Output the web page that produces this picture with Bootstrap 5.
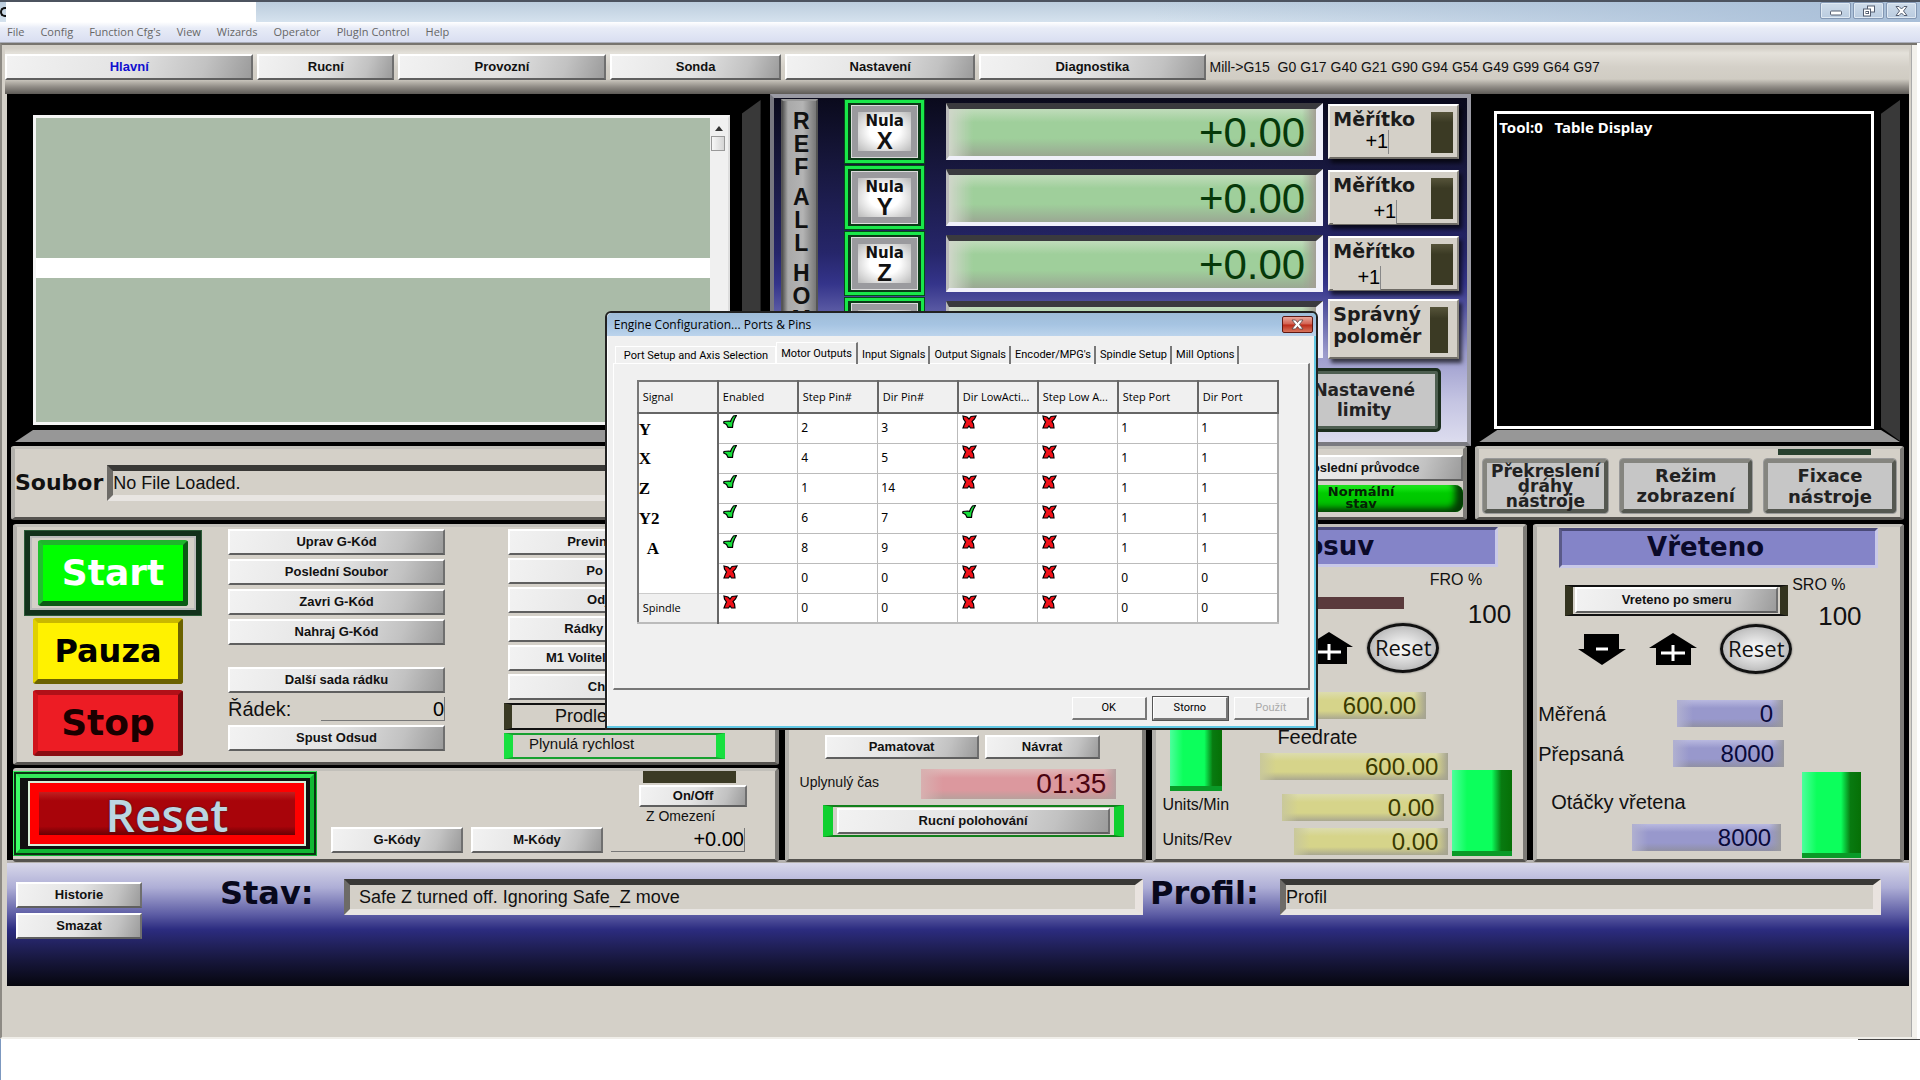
<!DOCTYPE html>
<html lang="cs">
<head>
<meta charset="utf-8">
<meta name="viewport" content="width=device-width, initial-scale=1">
<title>Mach3 CNC</title>
<link href="https://cdn.jsdelivr.net/npm/bootstrap@5.3.0/dist/css/bootstrap.min.css" rel="stylesheet">
<style>
body{font-family:"Liberation Sans",Arial,sans-serif;font-size:14px;line-height:18px;color:#111;background:#fff;overflow-x:hidden}
.wide{font-family:"DejaVu Sans",Verdana,sans-serif;font-weight:700}
.titlebar{height:22px;border-top:2px solid #4c535f;background:linear-gradient(90deg,#fff0 60%,#a9bfd8 100%),linear-gradient(#bccddd,#d5e2ee)}
.titlebar .blank{width:250px;height:20px;margin-left:6px;background:#fff}
.titlebar .orb{position:absolute;left:0;top:5px;width:6px;height:10px;border:2px solid #111;border-right:0;border-radius:6px 0 0 6px}
.winbtn{width:31px;height:17px;padding:0;line-height:0;border:1px solid #8397b3;border-radius:2px;background:linear-gradient(#cfdcea,#b9cbdf);box-shadow:inset 0 0 0 1px #dfe9f3}
.menubar{height:21px;background:linear-gradient(#fff,#e8ecf7 30%,#d9def1);border-bottom:1px solid #a9acb8;font-family:"Open Sans","Noto Sans",sans-serif;font-size:11px;gap:16px;padding:0 7px}
.menubar a{color:#666;text-decoration:none}
.work{background:#d4d0c8;border-left:2px solid #8d8a84;border-top:2px solid #77746e;border-bottom:2px solid #f0eee9;margin-right:3px;padding:0 8px 51px 5px;box-shadow:inset -5px 0 0 #f3f1ec,inset -6px 0 0 #aaa}
.tabs{height:49px;padding:9px 0 0 0;margin-left:-2px;gap:4px;background:linear-gradient(#d4d0c8 0 3px,#e4e1da 8px,#d4d0c8 22px,#d0ccc3 34px,#8f8b85 42px,#5e5b57)}
.mb{height:26px;border:2px solid;border-color:#fff #6f6f6f #5f5f5f #fff;background:linear-gradient(110deg,#f2f2f2 0%,#e3e3e3 50%,#c2c2c2 80%,#9b9b9b 100%);font:bold 13px/16px "Liberation Sans",Arial,sans-serif;color:#111;padding:0 4px;white-space:nowrap;overflow:hidden}
.tabs .mb{flex:1 1 0;min-width:0}
.deck{background:#000}
.rowA{display:grid;grid-template-columns:763fr 702fr 438fr;height:352px}
.blackp{background:#000;position:relative;padding:21px 40px 21px 26px}
.blackp::before{content:"";position:absolute;right:9px;top:6px;bottom:5px;width:19px;background:#393939;clip-path:polygon(100% 0,100% 100%,0 96%,0 4%)}
.blackp::after{content:"";position:absolute;left:8px;right:9px;bottom:4px;height:12px;background:#979797;clip-path:polygon(18px 0,calc(100% - 19px) 0,100% 100%,0 100%)}
.gcode{height:310px;border:3px solid #f4f4f4;border-right:2px solid #ddd;background:#aabba8;width:100%}
.gcode .line{position:relative;height:20px;background:#fff}
.sb{width:18px;background:#f0f0f0}
.sb .thumb{width:14px;height:15px;margin:5px 1px;border:1px solid #999;background:linear-gradient(90deg,#f7f7f7,#d5d5d5)}
.axes{border:4px solid #8c8c96;border-color:#9a9aa4 #9a9aa4 #7a7a80 #777780;background:linear-gradient(#0a0a1c,#16163a 18%,#26266a 45%,#34348a 54%,#5a5aa4 62%,#9a9acc 74%,#c4c4e2 88%,#dcdcee)}
.ref{width:46px;margin:1px 0 0 7px;background:linear-gradient(90deg,#5c5c5c,#a9a9a9 15%,#b4b4b4 60%,#777 100%);border:2px solid #555;border-top-color:#999;font:700 23px/23px "Liberation Sans",Arial,sans-serif;color:#111;padding:9px 0 0 4px}
.ref span{display:block;height:23px}
.ref .sp{height:7px}
.axgrid{display:grid;grid-template-columns:79px 1fr 131px;grid-auto-rows:66px;align-items:center;column-gap:5px;padding:0 8px 0 27px}
.nula{height:63px;padding:3px 4px;border:3px solid #19e84a;background:#0a3a16;outline:1px solid #064c16}
.nula>span{display:flex;flex-direction:column;height:100%;border:6px solid #9a9a9e;background:radial-gradient(#fff 40%,#b9b9b9);font-size:15px;line-height:18px;color:#111;box-shadow:0 0 0 1px #ddd}
.nula b{font:700 24px/21px "Liberation Sans",sans-serif}
.dro{width:100%;text-align:right;border:0;min-width:0;padding:0;outline:0}
.drobig{height:57px;margin-left:17px;width:calc(100% - 17px);border:solid;border-width:6px 7px 4px 3px;border-color:#3a3a3e #f0f0fa #f0f0fa #bbb;font-size:42px;color:#06390a;padding:2px 11px 0 0;background:linear-gradient(90deg,#cfd6c9 0,#9fce9c00 24px calc(100% - 14px),#a39f95),linear-gradient(#c0dcbb,#9fcf9b 28%,#9fcf9b 62%,#9aa893 100%)}
.meri{height:55px;background:#d4d0c8;border:2px solid;border-color:#fff #8b8880 #6f6c66 #f0efe9;box-shadow:3px 4px 4px #000a;padding:2px 4px 0 3px}
.meri .wide{font-size:19px;line-height:22px;color:#1c1c1c}
.meri .val{width:56px;height:24px;background:#d4d0c8;border:0;border-right:1px solid #888;font-size:20px;text-align:right;padding:0}
.led{background:linear-gradient(#56543a,#3b3a24 25%);width:22px;flex:none}
.gbtn{border:4px solid;border-color:#85857f #555851 #555851 #85857f;background:#c6c6c6;color:#222;border-radius:3px;outline:1px solid #999;padding:0 2px;text-align:center}
.limity{width:150px;height:60px;border:4px solid #4d5e50;outline:3px solid #1c2e1e;outline-offset:-1px;font-size:17px;line-height:20px}
.tooltxt{height:318px;border:3px solid #fff;padding:3px 2px;color:#fff;font:700 15px/20px "Noto Sans","Open Sans",sans-serif;background:#000;white-space:pre}
.pan{background:#d4d0c8;border:4px solid;border-color:#c2c0ba #7d7b77 #55534f #b2b0ab;border-bottom-width:3px;border-top-width:3px;border-radius:3px;min-width:0}
.rowB{display:grid;grid-template-columns:1457fr 429fr;column-gap:8px;padding:0 5px 4px 4px;height:78px}
.rowC{display:grid;grid-template-columns:766fr 362fr 375fr 371fr;column-gap:6px;padding:0 5px 0 6px;height:336px}
.fld{height:36px;background:#d4d0c8;border:solid;border-width:6px 8px 6px 6px;border-color:#393836 #e9e3df #e8e5e2 #6d6b67;font-size:18px;color:#111;padding:0;min-width:0;outline:0}
.greenb{background:linear-gradient(#20f020,#0c0 30%,#0b0);border:0;border-radius:8px;box-shadow:inset -8px -4px 6px #043c04;font-size:13px;line-height:12px;color:#052005;height:27px}
.big{width:150px;height:66px;border:5px solid;border-radius:3px}
.start{background:#0f0;border-color:#1fb52c #0b5a14 #0b5a14 #1fc02e;color:#fff;font-size:36px;line-height:44px}
.startf{border:5px solid #12311b;outline:1px solid #2c5a38;padding:4px 8px 4px 4px;width:176px;height:84px;box-shadow:inset 0 0 0 2px #bbb}
.pauza{background:#fff200;border-color:#c9b800 #6b6200 #6b6200 #e0d000;font-size:32px;line-height:40px}
.stop{background:#ed1c24;border-color:#b21018 #700a0e #8a0d12 #d0141c;font-size:36px;line-height:50px;color:#1a0000}
.resetf{width:304px;height:85px;border:7px solid;border-color:#35e85a #11b834 #11b834 #3dff66;outline:2px solid #0c3313;outline-offset:-3px;background:#111;padding:5px 6px 5px 10px}
.resetr{width:100%;height:100%;border:9px solid #f00;outline:2px solid #d8f0d8;background:linear-gradient(#c02020,#a8040a 20%,#a8040a 80%,#6a0004);color:#bcd6e2;font:600 46px/40px "Open Sans","Noto Sans",sans-serif;padding:0;text-shadow:0 0 2px #222}
.thin{border:0;border-right:1px solid #777;border-bottom:1px solid #777;background:transparent;font-size:20px;text-align:right;padding:0;height:24px}
.hdr{height:40px;background:#8484c8;border:3px solid;border-color:#4a4a78 #c8c8e8 #c8c8e8 #5a5a88;font-size:26px;line-height:32px;text-align:center;color:#0a0a2a}
.num{height:27px;font-size:24px;line-height:27px;padding-right:10px}
.yel{color:#3a3a00;background:linear-gradient(90deg,#c9c89b,#d6d48a00 16px calc(100% - 12px),#a5a391),linear-gradient(#dcdcae,#d6d48a 30% 70%,#aaa890)}
.blu{color:#0a0a3a;background:linear-gradient(90deg,#b0b0d0,#9696cc00 16px calc(100% - 12px),#9a9a9e),linear-gradient(#b9b9e0,#9898cc 30% 70%,#9090a4)}
.redd{color:#4a0410;background:linear-gradient(90deg,#d8b0b0,#dc969c00 22px calc(100% - 12px),#b4a0a0),linear-gradient(#e0b8b8,#dc989e 30% 70%,#b8a09c);font-size:28px;height:30px}
.vbar{background:linear-gradient(90deg,#4cff9c,#0cff5c 25% 66%,#087a10 82%,#067006);border-bottom:5px solid #0a9a28}
.circ{width:72px;height:50px;border-radius:50%;border:3px solid #111;background:radial-gradient(#fff,#c8c8c8 60%,#999);font:500 22px/28px "Open Sans",sans-serif;padding:0 0 3px;box-shadow:0 0 2px #555;color:#111}
.arr{border:0;background:none;padding:0;line-height:0}
.t20{font-size:20px;line-height:24px}.t16{font-size:16px;line-height:20px}.t26{font-size:26px;line-height:26px}
.status{height:126px;background:linear-gradient(#d8d8ea,#aeaed6 20%,#5c5ca4 42%,#2c2c80 54%,#22225e 66%,#16163a 80%,#06060e);border-top:3px solid #b5b2b0}
.status label{font-size:32px;line-height:32px;color:#08081c}
/* dialog */
.dlg{position:absolute;left:31.5%;top:311px;width:713px;height:419px;background:#f0f0f0;border:2px solid #222;border-radius:6px 6px 0 0;box-shadow:inset -1px -1px 0 1px #62c8e4,inset 1px 0 0 #fff;font:11px/16px "Open Sans","Noto Sans",sans-serif;color:#000}
.dlgt{height:23px;border-radius:5px 5px 0 0;background:linear-gradient(#9fbcd8,#a6c4e2 50%,#bcd4ec);padding:0 3px 0 7px;font-size:12px}
.cls{width:31px;height:17px;border:1px solid #5e1812;border-radius:2px;padding:0;line-height:0;background:linear-gradient(#e9a79c,#d2604f 48%,#bb2a18 52%,#d8745c)}
.dtabs{margin:7px 0 0 8px;height:20px}
.dtabs button{border:0;border-right:2px solid #777;background:none;padding:0 3px 0 4px;font:11px/16px Roboto,"Liberation Sans",sans-serif;height:18px;margin-top:3px;white-space:nowrap}
.dtabs .first{border:1px solid #fff;border-width:1px 1px 0;padding:0 7px 0 8px}
.dtabs .on{height:22px;margin-top:-1px;border-left:1px solid #fff;border-top:1px solid #fff;padding:0 4px}
.dbody{margin:0 6px;height:327px;border:solid;border-width:1px 2px 2px 1px;border-color:#fff #777 #777 #fff;padding:16px 0 0 23px}
.ptab{width:642px;table-layout:fixed;border-collapse:collapse;background:#fff;border:2px solid #777;border-right:2px solid #aaa;border-bottom:2px solid #bbb}
.ptab th{height:32px;font-weight:400;background:#f0f0f0;border-right:2px solid #666;border-bottom:2px solid #666;padding:0 4px;white-space:nowrap;overflow:hidden}
.ptab td{height:30px;border:1px solid #bbb;padding:0 3px;vertical-align:middle;font:12px/16px "Noto Sans",sans-serif}
.ptab td.ic{vertical-align:top;padding:1px 4px;line-height:0}
.ptab td.ax{border-left:0;border-top:0;border-bottom:0;border-right:2px solid #666;font:700 17px/20px "Liberation Serif",serif;padding:2px 0 0}
.ptab td.sp{background:#f0f0f0;border-top:1px solid #ccc;border-right:2px solid #666;padding:0 4px;font:11px/16px "Open Sans",sans-serif}
.db{width:75px;height:23px;border:solid;border-width:1px 2px 2px 1px;border-color:#fff #777 #777 #fff;background:#f0f0f0;font:11px/16px Roboto,sans-serif;padding:0}
.foot{height:41px;border-left:1px solid #7c98c0}
</style>
<script src="https://cdn.jsdelivr.net/npm/bootstrap@5.3.0/dist/js/bootstrap.bundle.min.js"></script>
</head>
<body>
<svg width="0" height="0" class="position-absolute" aria-hidden="true">
<symbol id="ok" viewBox="0 0 14 13"><path d="M13.500 0.500 L10.500 1 L8.500 4 L7.500 6.500 L6 6 L1 6.500 L0.700 8 L3.500 9.500 L5 12.300 L9.500 12.300 L10 8 L11.500 4 Z" fill="#16e03a" stroke="#000" stroke-width="1.200"/></symbol>
<symbol id="no" viewBox="0 0 15 14"><path d="M1 1 L5 2 L7 4 L9 1.500 L14 1 L12.500 4 L10 6.500 L11.500 9 L12 13 L8.500 13 L7 11 L5.500 13 L1 13 L2.500 9 L3.500 7 L1.500 4 Z" fill="#f01018" stroke="#000" stroke-width="1.200"/></symbol>
<symbol id="dn" viewBox="0 0 48 32"><path d="M6 1H41V16H48L24 32L0 16H6Z" fill="#000"/><path d="M18 16H30" stroke="#fff" stroke-width="3"/></symbol>
<symbol id="up" viewBox="0 0 48 32"><path d="M24 0L48 15H42V32H7V15H0Z" fill="#000"/><path d="M12 20H36M24 12V28" stroke="#fff" stroke-width="3"/></symbol>
</svg>
<header>
<div class="titlebar d-flex position-relative">
<span class="orb"></span><div class="blank"></div>
<div class="ms-auto d-flex" style="gap:2px;padding-right:3px">
<button class="winbtn" aria-label="Minimize"><svg width="14" height="10" viewBox="0 0 14 10"><rect x="1.500" y="5" width="11" height="4" rx="1" fill="#fff" stroke="#555e70"/></svg></button>
<button class="winbtn" aria-label="Restore"><svg width="14" height="12" viewBox="0 0 14 12"><rect x="5.500" y="1" width="7" height="6" fill="#fff" stroke="#555e70"/><rect x="1.500" y="4" width="7" height="7" fill="#fff" stroke="#555e70"/><rect x="4" y="6.500" width="2.500" height="2" fill="none" stroke="#555e70"/></svg></button>
<button class="winbtn" aria-label="Close"><svg width="13" height="10" viewBox="0 0 13 10"><path d="M1 .5H4L6.500 3L9 .5H12L8.500 5L12 9.500H9L6.500 7L4 9.500H1L4.500 5Z" fill="#fff" stroke="#555e70"/></svg></button>
</div></div>
<nav class="menubar d-flex align-items-center"><a href="#">File</a><a href="#">Config</a><a href="#">Function Cfg's</a><a href="#">View</a><a href="#">Wizards</a><a href="#">Operator</a><a href="#">PlugIn Control</a><a href="#">Help</a></nav>
</header>
<main class="work">
<div class="tabs d-flex align-items-start">
<button class="mb" style="flex-grow:237;color:#1010d0">Hlavní</button><button class="mb" style="flex-grow:125">Rucní</button><button class="mb" style="flex-grow:196">Provozní</button><button class="mb" style="flex-grow:160">Sonda</button><button class="mb" style="flex-grow:178">Nastavení</button><button class="mb" style="flex-grow:215">Diagnostika</button>
<div class="pt-1" style="flex:701 1 0;white-space:pre">Mill-&gt;G15  G0 G17 G40 G21 G90 G94 G54 G49 G99 G64 G97</div>
</div>
<div class="deck">
<section class="rowA">
<div class="blackp"><div class="gcode d-flex"><div class="flex-grow-1" style="padding-top:140px"><div class="line"></div></div><div class="sb text-center"><svg width="8" height="5" viewBox="0 0 8 5" class="d-block mx-auto mt-2"><path d="M4 0L8 5H0Z" fill="#333"/></svg><div class="thumb"></div></div></div></div>
<div class="axes d-flex">
<button class="ref d-flex flex-column justify-content-start align-items-center align-self-stretch overflow-hidden"><span>R</span><span>E</span><span>F</span><span class="sp"></span><span>A</span><span>L</span><span>L</span><span class="sp"></span><span>H</span><span>O</span><span>M</span><span>E</span></button>
<div class="flex-grow-1 d-flex flex-column">
<div class="axgrid">
<button class="nula"><span class="wide">Nula<b>X</b></span></button><input class="dro drobig" readonly value="+0.00" aria-label="X"><div class="meri d-flex justify-content-between"><div><label class="wide d-block" for="mx">Měřítko</label><input id="mx" class="val" readonly value="+1"></div><i class="led my-1"></i></div>
<button class="nula"><span class="wide">Nula<b>Y</b></span></button><input class="dro drobig" readonly value="+0.00" aria-label="Y"><div class="meri d-flex justify-content-between"><div><label class="wide d-block" for="my">Měřítko</label><input id="my" class="val mt-1" style="width:64px" readonly value="+1"></div><i class="led my-1"></i></div>
<button class="nula"><span class="wide">Nula<b>Z</b></span></button><input class="dro drobig" readonly value="+0.00" aria-label="Z"><div class="meri d-flex justify-content-between"><div><label class="wide d-block" for="mz">Měřítko</label><input id="mz" class="val mt-1" style="width:48px" readonly value="+1"></div><i class="led my-1"></i></div>
<button class="nula"><span class="wide">Nula<b>4</b></span></button><input class="dro drobig" readonly value="+0.00" aria-label="4"><div class="meri d-flex" style="height:60px"><div class="wide">Správný<br>poloměr</div><i class="led my-1 ms-2" style="width:18px"></i></div>
</div>
<div class="text-end pe-4 pt-2 me-1"><button class="gbtn limity wide">Nastavené<br>limity</button></div>
</div></div>
<div class="blackp" style="padding:17px 35px 17px 23px"><div class="tooltxt">Tool:0   Table Display</div></div>
</section>
<section class="rowB">
<div class="pan d-flex align-items-center">
<label class="wide" for="file" style="font-size:22px">Soubor</label><input id="file" class="fld ms-1" style="width:900px" readonly value="No File Loaded.">
<div class="ms-auto d-flex flex-column" style="width:204px"><button class="mb">Poslední průvodce</button><button class="greenb wide mt-1">Normální<br>stav</button></div>
</div>
<div class="pan d-flex px-1 position-relative align-items-end pb-1" style="font-size:18px;gap:12px">
<button class="gbtn wide" style="flex:128 1 0;height:54px;line-height:15px;font-size:17px;padding:0">Překreslení<br>dráhy<br>nástroje</button>
<button class="gbtn wide" style="flex:132 1 0;height:54px;line-height:20px">Režim<br>zobrazení</button>
<button class="gbtn wide" style="flex:132 1 0;height:54px;line-height:21px">Fixace<br>nástroje</button>
<i class="position-absolute" style="right:29px;top:0;width:93px;height:6px;background:#28402f"></i>
</div>
</section>
<section class="rowC">
<div class="d-flex flex-column" style="gap:3px">
<div class="pan d-flex" style="height:241px">
<div class="d-flex flex-column ps-2 pt-1" style="width:211px"><div class="startf"><button class="big start wide d-block ms-1" style="height:66px">Start</button></div><button class="big pauza wide ms-2" style="margin-top:3px">Pauza</button><button class="big stop wide ms-2" style="margin-top:6px">Stop</button></div>
<div class="d-flex flex-column" style="width:217px;padding-top:2px;gap:4px"><button class="mb">Uprav G-Kód</button><button class="mb">Poslední Soubor</button><button class="mb">Zavri G-Kód</button><button class="mb">Nahraj G-Kód</button><button class="mb" style="margin-top:18px">Další sada rádku</button>
<div class="d-flex justify-content-between t20"><label for="rad">Řádek:</label><input id="rad" class="thin" style="width:124px" readonly value="0"></div><button class="mb">Spust Odsud</button></div>
<div class="d-flex flex-column" style="width:221px;margin-left:59px;gap:3px;padding-top:2px"><button class="mb mx-1">Previnutí dráhy</button><button class="mb mx-1">Po Bloku</button><button class="mb mx-1">Odjezd Z</button><button class="mb mx-1">Rádky preskocit</button><button class="mb mx-1">M1 Volitelné zastavení</button><button class="mb mx-1">Chlazení</button>
<div class="text-center" style="height:27px;border:2px solid #111;border-left:8px solid #3a3a24;font-size:18px;line-height:22px;padding-right:54px">Prodleva</div><div style="height:26px;border:2px solid #18a030;border-left:9px solid #18e040;border-right:9px solid #18e040;font-size:15px;line-height:18px;padding-left:16px">Plynulá rychlost</div></div>
</div>
<div class="pan d-flex align-items-end flex-grow-1" style="border-left-width:0">
<div class="resetf align-self-start flex-shrink-0"><button class="resetr">Reset</button></div>
<button class="mb" style="width:132px;margin:0 0 6px 14px">G-Kódy</button><button class="mb ms-2" style="width:132px;margin-bottom:6px">M-Kódy</button>
<div class="d-flex flex-column align-items-start ms-2" style="width:134px;height:88px"><i style="width:93px;height:12px;background:#3b3a24;margin-left:32px" class="flex-shrink-0"></i><button class="mb flex-shrink-0" style="width:108px;height:22px;margin:2px 0 0 28px;line-height:14px">On/Off</button><label for="zo" style="margin:0 0 0 35px">Z Omezení</label><input id="zo" class="thin w-100" style="margin-top:3px" readonly value="+0.00"></div>
</div>
</div>
<div class="pan d-flex flex-column" style="padding:208px 26px 0 11px">
<div class="d-flex" style="padding-left:25px;gap:6px"><button class="mb" style="width:154px;height:24px">Pamatovat</button><button class="mb" style="width:115px;height:24px">Návrat</button></div>
<div class="d-flex justify-content-between align-items-center" style="margin-top:10px"><label for="cas" class="pb-1">Uplynulý čas</label><input id="cas" class="dro num redd" style="width:195px" readonly value="01:35"></div>
<div style="width:301px;margin:6px 0 0 23px;padding:1px 4px;border:2px solid #12801c;border-left:10px solid #10d030;border-right:10px solid #10d030"><button class="mb w-100">Rucní polohování</button></div>
</div>
<div class="pan">
<div class="hdr wide" style="margin:0 25px 0 6px">Posuv</div>
<div class="t16 text-end" style="padding:3px 41px 0 0">FRO %</div>
<div class="d-flex justify-content-between" style="height:33px;padding:3px 12px 0 24px"><i style="width:224px;height:12px;background:#5a3a3c" class="mt-1"></i><span class="t26" style="padding-top:8px">100</span></div>
<div class="d-flex justify-content-end align-items-center" style="padding-right:84px;gap:14px"><button class="arr" aria-label="minus"><svg width="48" height="32"><use href="#dn"/></svg></button><button class="arr" aria-label="plus"><svg width="48" height="32"><use href="#up"/></svg></button><button class="circ">Reset</button></div>
<div class="text-end" style="padding:19px 97px 0 0"><input class="dro num yel" style="width:186px" readonly value="600.00" aria-label="Rychlost"></div>
<div class="d-flex" style="height:138px">
<div class="d-flex flex-column" style="width:94px;padding-left:6px"><div class="vbar ms-2" style="width:52px;height:72px"></div><div class="t16 mt-1">Units/Min</div><div class="t16" style="margin-top:15px">Units/Rev</div></div>
<div class="d-flex flex-column align-items-end" style="width:202px"><label class="t20 w-100" style="padding:6px 0 0 27px" for="fr">Feedrate</label><input id="fr" class="dro num yel mt-1 me-1" style="width:188px" readonly value="600.00"><input class="dro num yel me-2" style="width:162px;margin-top:14px" readonly value="0.00" aria-label="Units/Min"><input class="dro num yel me-1" style="width:154px;margin-top:7px" readonly value="0.00" aria-label="Units/Rev"></div>
<div class="vbar" style="width:60px;height:86px;margin-top:51px"></div>
</div>
</div>
<div class="pan">
<div class="hdr wide" style="margin:1px 22px 0 22px;padding-right:26px">Vřeteno</div>
<div class="d-flex align-items-end" style="padding:0 0 0 28px;height:56px"><div class="flex-shrink-0 mb-2" style="width:223px;height:31px;border:2px solid #111;border-left:8px solid #33331f;border-right:8px solid #33331f;padding:0 2px"><button class="mb w-100">Vreteno po smeru</button></div><div class="ps-1" style="height:56px"><div class="t16" style="padding-top:7px">SRO %</div><div class="t26" style="padding:8px 0 0 26px">100</div></div></div>
<div class="d-flex align-items-center" style="padding-left:41px;gap:23px"><button class="arr" aria-label="minus"><svg width="48" height="32"><use href="#dn"/></svg></button><button class="arr" aria-label="plus"><svg width="48" height="32"><use href="#up"/></svg></button><button class="circ">Reset</button></div>
<div class="d-flex justify-content-between align-items-center" style="padding:26px 117px 0 1px"><label class="t20" for="me">Měřená</label><input id="me" class="dro num blu" style="width:106px" readonly value="0"></div>
<div class="d-flex justify-content-between align-items-center" style="padding:13px 116px 0 1px"><label class="t20" for="pr">Přepsaná</label><input id="pr" class="dro num blu" style="width:111px" readonly value="8000"></div>
<div class="d-flex justify-content-between" style="padding:5px 39px 0 14px"><div class="d-flex flex-column align-items-end" style="width:230px"><label class="t20 w-100" style="margin-top:18px" for="ot">Otáčky vřetena</label><input id="ot" class="dro num blu" style="width:149px;margin-top:10px" readonly value="8000"></div><div class="vbar" style="width:59px;height:86px"></div></div>
</div>
</section>
<section class="status d-flex">
<div class="d-flex flex-column" style="width:213px;padding:19px 78px 0 9px;gap:5px"><button class="mb">Historie</button><button class="mb">Smazat</button></div>
<label class="wide" style="width:124px;padding-top:14px" for="st">Stav:</label><div class="mt-3" style="flex:799 1 0"><input id="st" class="fld w-100" style="padding-left:9px" readonly value="Safe Z turned off. Ignoring Safe_Z move"></div>
<label class="wide" style="width:137px;padding:14px 0 0 7px" for="pf">Profil:</label><div class="mt-3" style="flex:601 1 0;margin-right:28px"><input id="pf" class="fld w-100" readonly value="Profil"></div>
</section>
</div>
</main>
<footer class="foot"><div class="ms-auto" style="width:62px;border-top:1px solid #444"></div></footer>

<div class="dlg" role="dialog" aria-label="Engine Configuration... Ports &amp; Pins">
<div class="dlgt d-flex align-items-center justify-content-between"><span>Engine Configuration... Ports &amp; Pins</span><button class="cls" aria-label="Close"><svg width="13" height="11" viewBox="0 0 13 11"><path d="M1 1H4.500L6.500 3.500L8.500 1H12L8.500 5.500L12 10H8.500L6.500 7.500L4.500 10H1L4.500 5.500Z" fill="#fff" stroke="#544" stroke-width=".8"/></svg></button></div>
<div class="dtabs d-flex"><button class="first">Port Setup and Axis Selection</button><button class="on">Motor Outputs</button><button>Input Signals</button><button>Output Signals</button><button>Encoder/MPG's</button><button>Spindle Setup</button><button>Mill Options</button></div>
<div class="dbody"><table class="ptab">
<thead><tr><th>Signal</th><th>Enabled</th><th>Step Pin#</th><th>Dir Pin#</th><th>Dir LowActi...</th><th>Step Low A...</th><th>Step Port</th><th>Dir Port</th></tr></thead>
<tbody>
<tr><td class="ax">Y</td><td class="ic"><svg width="14" height="13"><use href="#ok"/></svg></td><td>2</td><td>3</td><td class="ic"><svg width="15" height="14"><use href="#no"/></svg></td><td class="ic"><svg width="15" height="14"><use href="#no"/></svg></td><td>1</td><td>1</td></tr>
<tr><td class="ax">X</td><td class="ic"><svg width="14" height="13"><use href="#ok"/></svg></td><td>4</td><td>5</td><td class="ic"><svg width="15" height="14"><use href="#no"/></svg></td><td class="ic"><svg width="15" height="14"><use href="#no"/></svg></td><td>1</td><td>1</td></tr>
<tr><td class="ax">Z</td><td class="ic"><svg width="14" height="13"><use href="#ok"/></svg></td><td>1</td><td>14</td><td class="ic"><svg width="15" height="14"><use href="#no"/></svg></td><td class="ic"><svg width="15" height="14"><use href="#no"/></svg></td><td>1</td><td>1</td></tr>
<tr><td class="ax">Y2</td><td class="ic"><svg width="14" height="13"><use href="#ok"/></svg></td><td>6</td><td>7</td><td class="ic"><svg width="14" height="13"><use href="#ok"/></svg></td><td class="ic"><svg width="15" height="14"><use href="#no"/></svg></td><td>1</td><td>1</td></tr>
<tr><td class="ax ps-2">A</td><td class="ic"><svg width="14" height="13"><use href="#ok"/></svg></td><td>8</td><td>9</td><td class="ic"><svg width="15" height="14"><use href="#no"/></svg></td><td class="ic"><svg width="15" height="14"><use href="#no"/></svg></td><td>1</td><td>1</td></tr>
<tr><td class="ax"></td><td class="ic"><svg width="15" height="14"><use href="#no"/></svg></td><td>0</td><td>0</td><td class="ic"><svg width="15" height="14"><use href="#no"/></svg></td><td class="ic"><svg width="15" height="14"><use href="#no"/></svg></td><td>0</td><td>0</td></tr>
<tr><td class="sp">Spindle</td><td class="ic"><svg width="15" height="14"><use href="#no"/></svg></td><td>0</td><td>0</td><td class="ic"><svg width="15" height="14"><use href="#no"/></svg></td><td class="ic"><svg width="15" height="14"><use href="#no"/></svg></td><td>0</td><td>0</td></tr>
</tbody></table></div>
<div class="d-flex justify-content-end" style="gap:6px;padding:7px 7px 0 0"><button class="db">OK</button><button class="db" style="outline:1px solid #555">Storno</button><button class="db" style="color:#aaa" disabled>Použít</button></div>
</div>
</body>
</html>
